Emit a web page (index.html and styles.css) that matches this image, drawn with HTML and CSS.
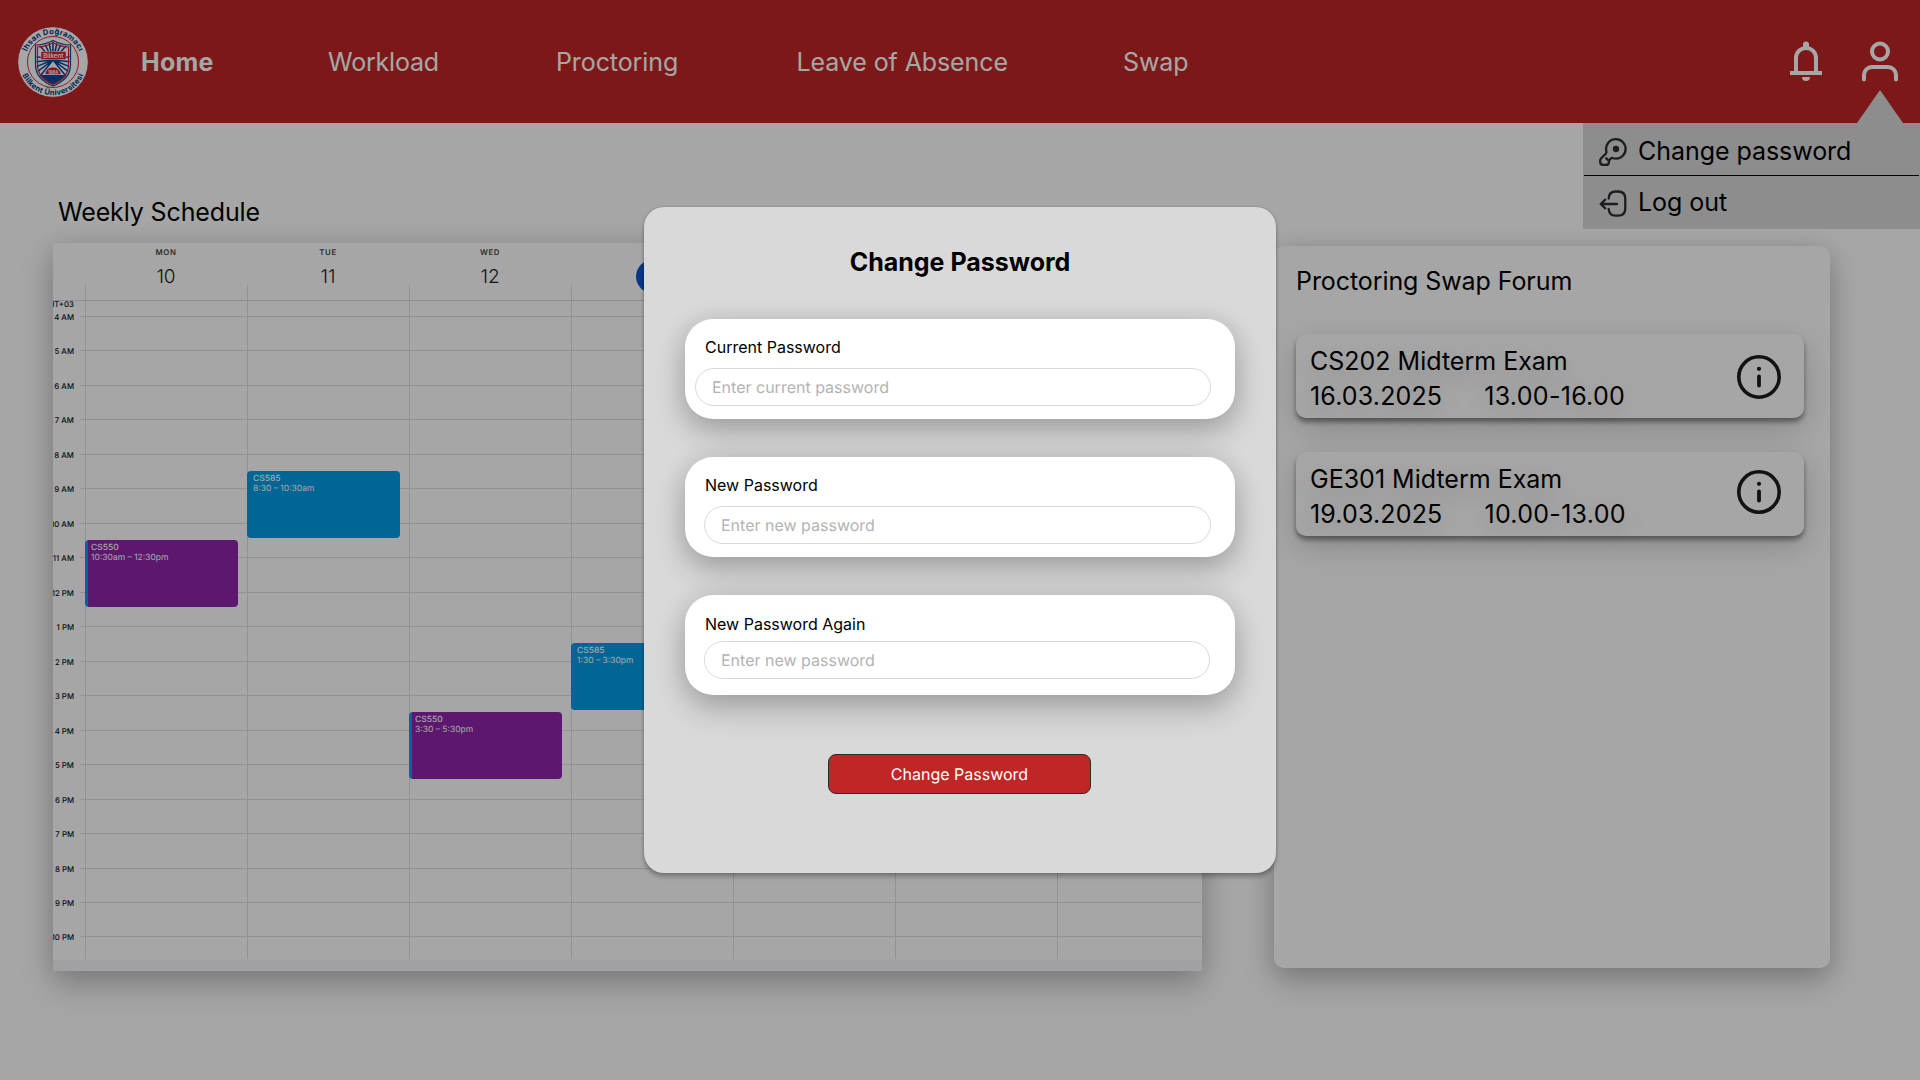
FILE: index.html
```html
<!DOCTYPE html>
<html lang="en">
<head>
<meta charset="utf-8">
<title>Home - Change Password</title>
<link rel="stylesheet" href="styles.css">
</head>
<body>
<div class="page">
  <header class="topbar">
    <svg class="logo" viewBox="0 0 72 72" width="72" height="72">
      <defs>
        <path id="arc-top" d="M8 36a28 28 0 0 1 56 0"/>
        <path id="arc-bottom" d="M2.800 36a33.200 33.200 0 0 0 66.400 0"/>
        <clipPath id="shield"><path d="M19.5 20q8 0 16.500-4.500q8.500 4.500 16.500 4.500v19q0 13-16.500 20q-16.500-7-16.500-20z"/></clipPath>
      </defs>
      <circle cx="36" cy="36" r="35.300" fill="#fff" stroke="#c8102e" stroke-width=".8"/>
      <circle cx="36" cy="36" r="25.500" fill="#fff" stroke="#d2142d" stroke-width=".9"/>
      <text class="logo-text"><textPath href="#arc-top" startOffset="50%" text-anchor="middle">İhsan Doğramacı</textPath></text>
      <text class="logo-text"><textPath href="#arc-bottom" startOffset="50%" text-anchor="middle">Bilkent Üniversitesi</textPath></text>
      <g clip-path="url(#shield)">
        <path fill="#fff" d="M18 14h36v46H18z"/>
        <path stroke="#00479d" stroke-width="1.500" fill="none" d="M36 35V12M36 35L31 12M36 35L41 12M36 35L25 12M36 35L47 12M36 35L18 14M36 35L54 14M36 34L16 30M36 34L56 30M36 34L16 36M36 34L56 36M36 34L16 42M36 34L56 42M36 34L16 49M36 34L56 49M36 34L20 54M36 34L52 54"/>
        <path fill="#00479d" d="M18 49h36v12H18z"/>
        <path fill="#e01b2f" stroke="#fff" stroke-width=".6" d="M28 48.500a8 7.500 0 0 1 16 0z"/>
      </g>
      <path fill="none" stroke="#00479d" stroke-width="1.200" d="M18.500 19q9 0 17.500-4.500q8.500 4.500 17.500 4.500v20q0 14-17.500 21q-17.500-7-17.500-21z"/>
      <path fill="none" stroke="#e01b2f" stroke-width="1.200" d="M20.500 21q8 0 15.500-4.200q7.500 4.200 15.500 4.200v18q0 12.500-15.500 19q-15.500-6.500-15.500-19z"/>
      <rect x="24" y="25.500" width="25" height="8" fill="#e01b2f" stroke="#fff" stroke-width=".5"/>
      <text class="logo-name" x="36.300" y="31.800" text-anchor="middle">Bilkent</text>
      <text class="logo-year" x="36" y="47.500" text-anchor="middle">1984</text>
    </svg>
    <nav class="nav">
      <a class="home">Home</a>
      <a class="workload">Workload</a>
      <a class="proctoring">Proctoring</a>
      <a class="leave">Leave of Absence</a>
      <a>Swap</a>
    </nav>
    <div class="actions">
      <svg width="32" height="41" viewBox="0 0 32 41"><path d="M6 31V17a10 10 0 0 1 20 0v14" fill="none" stroke="#fff" stroke-width="4"/><path d="M0 30h32v4H0zM13 6V3.500a3 3 0 0 1 6 0V6zM12 36h8a4 4 0 0 1-8 0z" fill="#fff"/></svg>
      <svg width="36" height="41" viewBox="0 0 36 41" fill="none" stroke="#fff" stroke-width="4"><circle cx="18" cy="10.500" r="8"/><path d="M2 38.500V34a8 8 0 0 1 8-8h16a8 8 0 0 1 8 8v4.500" stroke-linecap="round"/></svg>
    </div>
  </header>

  <main class="content">
    <section class="schedule">
      <h2>Weekly Schedule</h2>
      <div class="calendar">
        <div class="days">
          <div class="day"><small>MON</small><b>10</b></div>
          <div class="day"><small>TUE</small><b>11</b></div>
          <div class="day"><small>WED</small><b>12</b></div>
          <div class="day today"><small></small><b></b></div>
          <div class="day"></div>
          <div class="day"></div>
          <div class="day"></div>
        </div>
        <div class="hours">
          <span class="hour zone" style="grid-row:1">GMT+03</span>
          <span class="hour" style="grid-row:2">4 AM</span><i class="line" style="grid-row:2"></i>
          <span class="hour" style="grid-row:4">5 AM</span><i class="line" style="grid-row:4"></i>
          <span class="hour" style="grid-row:6">6 AM</span><i class="line" style="grid-row:6"></i>
          <span class="hour" style="grid-row:8">7 AM</span><i class="line" style="grid-row:8"></i>
          <span class="hour" style="grid-row:10">8 AM</span><i class="line" style="grid-row:10"></i>
          <span class="hour" style="grid-row:12">9 AM</span><i class="line" style="grid-row:12"></i>
          <span class="hour" style="grid-row:14">10 AM</span><i class="line" style="grid-row:14"></i>
          <span class="hour" style="grid-row:16">11 AM</span><i class="line" style="grid-row:16"></i>
          <span class="hour" style="grid-row:18">12 PM</span><i class="line" style="grid-row:18"></i>
          <span class="hour" style="grid-row:20">1 PM</span><i class="line" style="grid-row:20"></i>
          <span class="hour" style="grid-row:22">2 PM</span><i class="line" style="grid-row:22"></i>
          <span class="hour" style="grid-row:24">3 PM</span><i class="line" style="grid-row:24"></i>
          <span class="hour" style="grid-row:26">4 PM</span><i class="line" style="grid-row:26"></i>
          <span class="hour" style="grid-row:28">5 PM</span><i class="line" style="grid-row:28"></i>
          <span class="hour" style="grid-row:30">6 PM</span><i class="line" style="grid-row:30"></i>
          <span class="hour" style="grid-row:32">7 PM</span><i class="line" style="grid-row:32"></i>
          <span class="hour" style="grid-row:34">8 PM</span><i class="line" style="grid-row:34"></i>
          <span class="hour" style="grid-row:36">9 PM</span><i class="line" style="grid-row:36"></i>
          <span class="hour" style="grid-row:38">10 PM</span><i class="line" style="grid-row:38"></i>
          <i class="col" style="grid-column:2"></i><i class="col" style="grid-column:3"></i><i class="col" style="grid-column:4"></i><i class="col" style="grid-column:5"></i><i class="col" style="grid-column:6"></i><i class="col" style="grid-column:7"></i><i class="col" style="grid-column:8"></i>
          <div class="event purple" style="grid-column:2;grid-row:15 / span 4"><strong>CS550</strong>10:30am – 12:30pm</div>
          <div class="event blue" style="grid-column:3;grid-row:11 / span 4"><strong>CS585</strong>8:30 – 10:30am</div>
          <div class="event purple" style="grid-column:4;grid-row:25 / span 4"><strong>CS550</strong>3:30 – 5:30pm</div>
          <div class="event blue" style="grid-column:5;grid-row:21 / span 4"><strong>CS585</strong>1:30 – 3:30pm</div>
        </div>
      </div>
    </section>

    <section class="forum">
      <h2>Proctoring Swap Forum</h2>
      <article class="swap">
        <div class="swap-text"><p>CS202 Midterm Exam</p><p class="when"><span>16.03.2025</span><span>13.00-16.00</span></p></div>
        <svg class="info" width="44" height="44" viewBox="0 0 44 44"><circle cx="22" cy="22" r="20.200" fill="none" stroke="#1d1b20" stroke-width="3.600"/><path d="M22 21.500v9" stroke="#1d1b20" stroke-width="3.800" stroke-linecap="round"/><circle cx="22" cy="13.800" r="2.100" fill="#1d1b20"/></svg>
      </article>
      <article class="swap second">
        <div class="swap-text"><p>GE301 Midterm Exam</p><p class="when"><span>19.03.2025</span><span>10.00-13.00</span></p></div>
        <svg class="info" width="44" height="44" viewBox="0 0 44 44"><circle cx="22" cy="22" r="20.200" fill="none" stroke="#1d1b20" stroke-width="3.600"/><path d="M22 21.500v9" stroke="#1d1b20" stroke-width="3.800" stroke-linecap="round"/><circle cx="22" cy="13.800" r="2.100" fill="#1d1b20"/></svg>
      </article>
    </section>
  </main>

  <div class="menu">
    <svg class="menu-tip" width="46" height="33" viewBox="0 0 46 33"><path d="M23 0l23 33H0z" fill="#d9d9d9"/></svg>
    <a class="menu-item first">
      <svg width="28" height="28" viewBox="0 0 28 28" fill="none" stroke="#2b2b33" stroke-width="2.300" stroke-linecap="round" stroke-linejoin="round"><path d="M16.900 1.200a9.700 9.700 0 0 1 0 19.400q-1.700 0-3.200-.6-1-.3-1.700.4L10 22.500v1.300q0 3.200-3 3.200H4.500q-3.300 0-3.300-3.300v-1.200q0-1.300 1-2.300L7 15.500q.6-1 .3-2.500A9.700 9.700 0 0 1 16.900 1.200zM7.300 20.300L10 22.800"/><circle cx="17" cy="11" r="2" fill="#2b2b33"/></svg>
      <span>Change password</span>
    </a>
    <a class="menu-item">
      <svg width="28" height="28" viewBox="0 0 28 28" fill="none" stroke="#2b2b33" stroke-width="2.300" stroke-linecap="round" stroke-linejoin="round"><path d="M9.700 8.500q.3-7 7-7h2.300q7.300 0 7.300 7.300v9.200q0 7.700-7.300 7.700h-2.300q-6.700 0-7-6.700M18 14H2M6.300 9.700l-4.600 4.300L6.300 18.300"/></svg>
      <span>Log out</span>
    </a>
  </div>
</div>

<div class="dimmer"></div>

<form class="modal">
  <h1>Change Password</h1>
  <div class="field current"><label for="p1">Current Password</label><input id="p1" type="text" placeholder="Enter current password"></div>
  <div class="field"><label for="p2">New Password</label><input id="p2" type="text" placeholder="Enter new password"></div>
  <div class="field again"><label for="p3">New Password Again</label><input id="p3" type="text" placeholder="Enter new password"></div>
  <button type="button">Change Password</button>
</form>
</body>
</html>
```
FILE: styles.css
```css
* { box-sizing: border-box; }

body {
  margin: 0;
  width: 1920px;
  height: 1080px;
  overflow: hidden;
  position: relative;
  background: #fff;
  color: #000;
  font-family: Inter, "Liberation Sans", sans-serif;
  font-size: 25px;
}

h1, h2, p { margin: 0; font-weight: 400; font-size: 25px; }

.page { isolation: isolate; }

.topbar {
  display: flex;
  align-items: center;
  height: 123px;
  padding: 0 22px 0 17px;
  background: #c02626;
  color: #fff;
}
.logo { flex: none; }
.logo-text { font-size: 7.6px; font-weight: 700; fill: #00377b; letter-spacing: .3px; }
.logo-name { font-size: 6.2px; font-weight: 600; fill: #fff; }
.logo-year { font-size: 4.2px; font-weight: 700; fill: #fff; }
.nav { display: flex; flex: 1; padding-left: 52px; line-height: 30px; letter-spacing: -.1px; }
.nav .home { width: 187px; font-weight: 700; letter-spacing: .25px; }
.nav .workload { width: 228px; letter-spacing: -.2px; }
.nav .proctoring { width: 240.500px; }
.nav .leave { width: 326.500px; }
.actions { display: flex; gap: 40px; }
.actions svg { display: block; }

.content { display: flex; align-items: flex-start; padding: 74px 0 0 53px; gap: 72px; }

.schedule { width: 1149px; }
.schedule h2 { line-height: 30px; padding-left: 5px; margin-bottom: 16px; letter-spacing: -.13px; }
.calendar {
  height: 728px;
  overflow: hidden;
  background: linear-gradient(#fff 717px, #f7f8fb 717px);
  box-shadow: 0 14px 32px rgba(0, 0, 0, .22), 0 2px 24px rgba(0, 0, 0, .1);
  text-rendering: geometricPrecision;
}
.days { display: flex; width: 1166px; height: 58px; padding-left: 32px; border-bottom: 1px solid #dadce0; }
.day {
  width: 162px;
  display: flex;
  flex-direction: column;
  align-items: center;
  padding-top: 4px;
  color: #202124;
  background: linear-gradient(#dde0e6, #dde0e6) 0 42px / 1px 15px no-repeat;
}
.day small { height: 10px; font-size: 7.8px; line-height: 10px; font-weight: 600; letter-spacing: .6px; color: #44474a; }
.day b { font-weight: 350; font-size: 19px; line-height: 34px; margin-top: 3px; width: 33px; height: 33px; text-align: center; }
.today b { border-radius: 50%; background: #0b57d0; }

.hours {
  display: grid;
  width: 1166px;
  grid-template-columns: 32px repeat(7, 162px);
  grid-template-rows: 15px repeat(36, 17.235px) 22.500px;
}
.hour {
  grid-column: 1;
  display: flex;
  justify-content: flex-end;
  height: 10px;
  margin-top: -4px;
  padding-right: 11px;
  font-size: 7.8px;
  line-height: 10px;
  font-weight: 500;
  color: #111;
  white-space: nowrap;
}
.zone { margin-top: -2px; }
.line { grid-column: 1 / -1; height: 1px; margin-left: 27px; background: #dde0e6; }
.col { grid-row: 1 / -1; width: 1px; background: #dde0e6; }
.event {
  margin: 0 9px 2px 0;
  padding: 3px 0 0 6px;
  border-radius: 4px;
  font-size: 8.5px;
  line-height: 10px;
  color: #fff;
  white-space: nowrap;
  z-index: 1;
}
.event strong { display: block; font-weight: 500; }
.blue { background: #039be5; }
.purple { background: linear-gradient(90deg, #039be5 3px, #8e24aa 3px); }

.forum {
  width: 556px;
  height: 722px;
  margin-top: 49px;
  padding: 20px 26px 0 22px;
  border-radius: 10px;
  background: #fff;
  box-shadow: 0 14px 32px rgba(0, 0, 0, .22), 0 2px 24px rgba(0, 0, 0, .1);
}
.forum h2 { line-height: 30px; margin-bottom: 38px; letter-spacing: -.08px; }
.swap {
  display: flex;
  justify-content: space-between;
  height: 84px;
  margin-bottom: 34px;
  padding: 10px 23px 0 14px;
  border-radius: 10px;
  background: #fff;
  box-shadow: 0 4px 5px rgba(0, 0, 0, .4), 0 10px 32px rgba(0, 0, 0, .18);
}
.swap p { line-height: 35px; text-shadow: 0 8px 24px rgba(0, 0, 0, .25); }
.when { display: flex; gap: 42px; }
.when span { letter-spacing: .15px; }
.when span + span { letter-spacing: .3px; }
.info { margin-top: 11px; }
.second .info { margin-top: 8px; }

.menu { position: absolute; left: 1583px; top: 123px; width: 337px; height: 106px; background: #d9d9d9; padding: 0 1px; }
.menu-tip { position: absolute; left: 274px; top: -33px; }
.menu-item { display: flex; gap: 11px; height: 53px; padding: 11px 0 0 15px; line-height: 30px; letter-spacing: -.05px; }
.menu-item.first { border-bottom: 1px solid #000; padding-top: 13px; }
.menu-item svg { margin-top: 3px; }
.first svg { margin-top: 2px; }

.dimmer { position: absolute; inset: 0; background: rgba(0, 0, 0, .35); }

.modal {
  position: absolute;
  left: 644px;
  top: 207px;
  width: 632px;
  height: 666px;
  padding: 40px 41px 0;
  border-radius: 20px;
  background: #d9d9d9;
  box-shadow: 0 4px 4px rgba(0, 0, 0, .25), 0 0 3px rgba(0, 0, 0, .2);
}
.modal h1 { font-weight: 700; line-height: 30px; text-align: center; margin-bottom: 42px; }
.field {
  display: flex;
  flex-direction: column;
  height: 100px;
  margin-bottom: 38px;
  padding: 17px 24px 0 19px;
  border-radius: 28px;
  background: #fff;
  box-shadow: 0 14px 32px rgba(0, 0, 0, .22), 0 2px 24px rgba(0, 0, 0, .1);
}
.field label { font-size: 16px; line-height: 22px; padding-left: 1px; }
.field input {
  height: 38px;
  margin-top: 10px;
  padding: 0 16px;
  border: 1px solid #d9d9d9;
  border-radius: 19px;
  background: #fff;
  font: 16px Inter, sans-serif;
  text-rendering: geometricPrecision;
  outline: none;
}
.field input::placeholder { color: #b3b3b3; opacity: 1; }
.current { padding-left: 10px; }
.current label { padding-left: 10px; }
.again { padding-top: 18px; padding-right: 25px; }
.again input { margin-top: 6px; }
.modal button {
  display: block;
  width: 263px;
  height: 40px;
  margin: 59px 0 0 143px;
  border: 1px solid #2c2c2c;
  border-radius: 8px;
  background: #c02626;
  color: #fff;
  font: 16px Inter, sans-serif;
  text-rendering: geometricPrecision;
}
```
